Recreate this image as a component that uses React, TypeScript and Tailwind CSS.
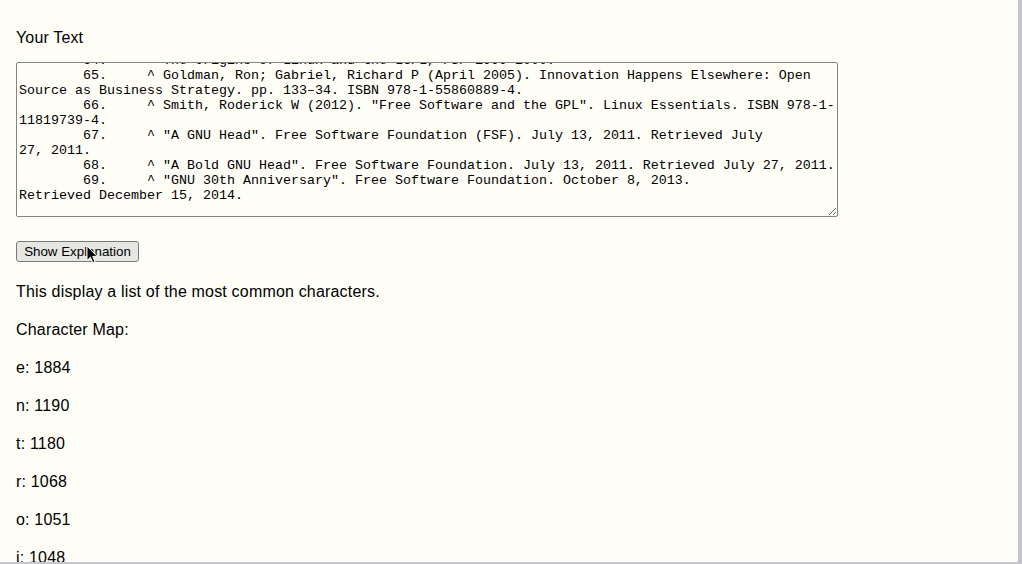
import React, { useLayoutEffect, useRef } from "react";

const TEXT = [
  "\t62.\t^ Stallman, Richard (1985). \"The GNU Manifesto\". Free Software Foundation.",
  "\t63.\t^ \"Free Software Definition\". Free Software Foundation. Retrieved July 27, 2011.",
  "\t64.\t^ The Origins of Linux and the LGPL, FSF 1999-2000.",
  "\t65.\t^ Goldman, Ron; Gabriel, Richard P (April 2005). Innovation Happens Elsewhere: Open",
  "Source as Business Strategy. pp. 133–34. ISBN 978-1-55860889-4.",
  "\t66.\t^ Smith, Roderick W (2012). \"Free Software and the GPL\". Linux Essentials. ISBN 978-1-",
  "11819739-4.",
  "\t67.\t^ \"A GNU Head\". Free Software Foundation (FSF). July 13, 2011. Retrieved July",
  "27, 2011.",
  "\t68.\t^ \"A Bold GNU Head\". Free Software Foundation. July 13, 2011. Retrieved July 27, 2011.",
  "\t69.\t^ \"GNU 30th Anniversary\". Free Software Foundation. October 8, 2013.",
  "Retrieved December 15, 2014.",
  "",
  "",
].join("\n");

const counts: [string, number][] = [
  ["e", 1884],
  ["n", 1190],
  ["t", 1180],
  ["r", 1068],
  ["o", 1051],
  ["i", 1048],
];

export default function App() {
  const ref = useRef<HTMLTextAreaElement>(null);
  useLayoutEffect(() => {
    if (ref.current) ref.current.scrollTop = 42;
  }, []);

  return (
    <div className="w-[1022px] h-[564px] overflow-hidden flex bg-[#fefef7] text-black font-['Liberation_Sans',Arial,sans-serif]">
      <div className="flex-1 flex flex-col min-w-0">
        <main className="relative flex-1 overflow-hidden px-4 pt-[29px]">
          <div className="text-[16px] leading-[18px] tracking-[0.15px]">Your Text</div>
          <textarea
            ref={ref}
            wrap="off"
            readOnly
            value={TEXT}
            className="mt-[15px] block w-[822px] h-[155px] border border-[#858585] rounded-[2px] p-[2px] bg-transparent text-black font-['Liberation_Mono','Courier_New',monospace] text-[13.333px] leading-[15px] [tab-size:8] overflow-hidden [scrollbar-width:none] outline-none"
          />
          <button className="mt-[24px] block w-[123px] h-[21px] border border-[#7a7a7a] rounded-[3px] bg-[#e6e6e2] text-[13.333px] leading-[19px] text-black text-center">
            Show Explanation
          </button>
          <div className="mt-[19px] flex flex-col gap-4 text-[16px] leading-[22px] tracking-[0.18px]">
            <p>This display a list of the most common characters.</p>
            <p>Character Map:</p>
            {counts.map(([c, n]) => (
              <p key={c}>
                {c}: {n}
              </p>
            ))}
          </div>
          <svg
            className="absolute left-[86px] top-[245px]"
            width="13"
            height="19"
            viewBox="-1 -1 13 19"
          >
            <path
              d="M0 0 L0 14.5 L3.4 11.2 L5.8 16.6 L8 15.6 L5.7 10.4 L10.2 10.4 Z"
              fill="#000"
              stroke="#fff"
              strokeWidth="1"
              strokeLinejoin="round"
            />
          </svg>
        </main>
        <div className="h-[2px] bg-[#c6c6cc]" />
      </div>
      <div className="w-[4px] bg-[#c2c3cc]" />
    </div>
  );
}
